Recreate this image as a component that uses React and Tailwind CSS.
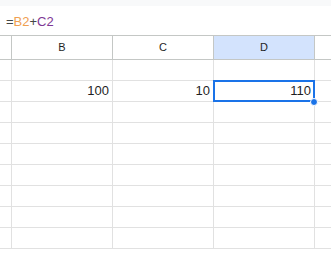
const COLS = ['B', 'C', 'D']

const ROWS = [
  { B: '', C: '', D: '' },
  { B: '100', C: '10', D: '110' },
  {}, {}, {}, {}, {}, {}, {},
]

function Cell({ value, selected }) {
  return (
    <div className={`relative h-[20px] border-l border-[#e1e1e1] flex items-center justify-end pr-[3px] text-[13px] text-[#1f1f1f] ${selected ? 'z-10' : ''}`}>
      {value}
      {selected && (
        <div className="absolute left-[-1px] top-[-1px] w-[102px] h-[22px] border-2 border-[#1a73e8]">
          <div className="absolute left-[95px] top-[16px] w-[8px] h-[8px] rounded-full bg-[#1a73e8] border border-white" />
        </div>
      )}
    </div>
  )
}

export default function App() {
  return (
    <div className="w-[331px] h-[261px] overflow-hidden bg-white" style={{ fontFamily: '"Liberation Sans", Arial, sans-serif' }}>
      {/* top strip */}
      <div className="h-[6px] bg-[#f8f9fa]" />

      {/* formula bar */}
      <div className="h-[29px] flex items-center pl-[6px] pt-[3px] text-[13px]">
        <span className="text-[#444746]">=</span>
        <span className="text-[#f0a050]">B2</span>
        <span className="text-[#444746]">+</span>
        <span className="text-[#7e3794]">C2</span>
      </div>

      {/* column headers */}
      <div className="grid grid-cols-[11px_101px_101px_101px_1fr] h-[25px] border-y border-[#c4c7c5] text-[11px] text-[#1f1f1f]">
        <div />
        {COLS.map((c) => (
          <div
            key={c}
            className={`border-l border-[#c4c7c5] flex items-center justify-center ${c === 'D' ? 'bg-[#d3e3fd]' : ''}`}
          >
            {c}
          </div>
        ))}
        <div className="border-l border-[#c4c7c5]" />
      </div>

      {/* rows */}
      {ROWS.map((r, i) => (
        <div key={i} className={`relative grid grid-cols-[11px_101px_101px_101px_1fr] border-b border-[#e1e1e1] ${i === 1 ? 'z-10' : ''}`}>
          <div className="h-[20px]" />
          <Cell value={r.B} />
          <Cell value={r.C} />
          <Cell value={r.D} selected={i === 1} />
          <Cell />
        </div>
      ))}
    </div>
  )
}
